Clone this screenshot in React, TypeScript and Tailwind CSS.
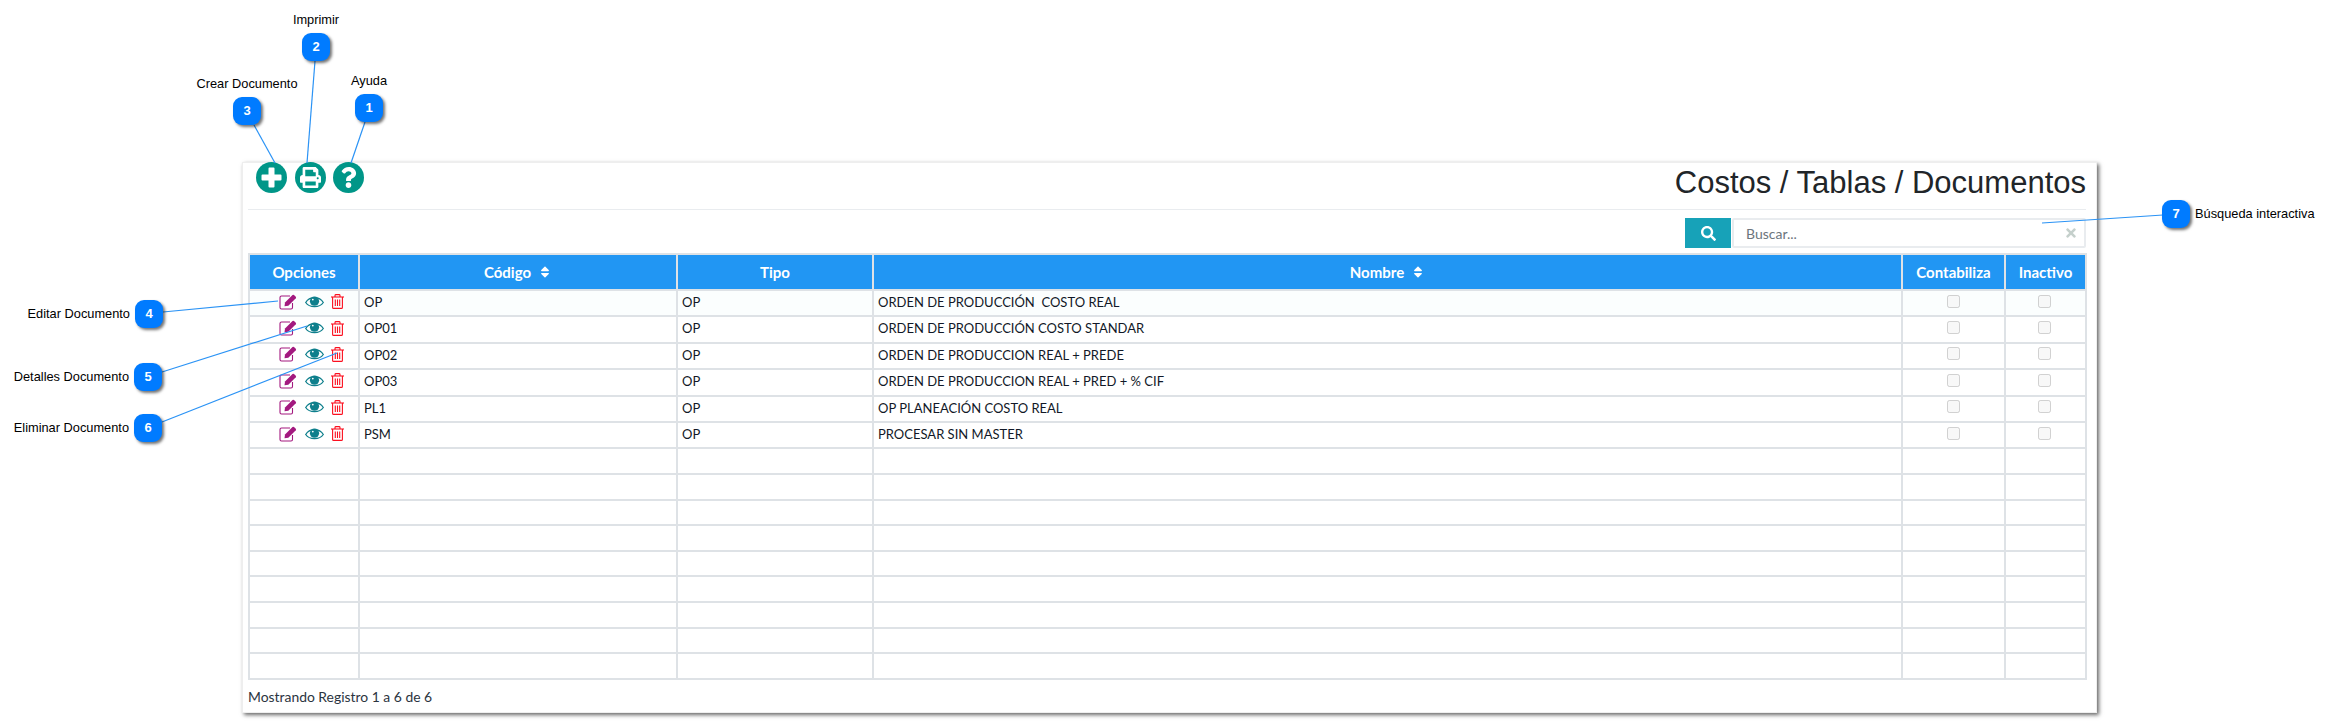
import { FaPrint, FaQuestion, FaSearch, FaTimes, FaSort } from "react-icons/fa";

const rows = [
  ["OP", "OP", "ORDEN DE PRODUCCIÓN  COSTO REAL"],
  ["OP01", "OP", "ORDEN DE PRODUCCIÓN COSTO STANDAR"],
  ["OP02", "OP", "ORDEN DE PRODUCCION REAL + PREDE"],
  ["OP03", "OP", "ORDEN DE PRODUCCION REAL + PRED + % CIF"],
  ["PL1", "OP", "OP PLANEACIÓN COSTO REAL"],
  ["PSM", "OP", "PROCESAR SIN MASTER"],
];
const empties = Array.from({ length: 9 }, (_, i) => i);

const callouts = [
  { n: "1", x: 369, y: 108 },
  { n: "2", x: 316, y: 47 },
  { n: "3", x: 247, y: 111 },
  { n: "4", x: 149, y: 314 },
  { n: "5", x: 148, y: 377 },
  { n: "6", x: 148, y: 428 },
  { n: "7", x: 2176, y: 214 },
];
const lines = [
  [365, 122, 351, 163],
  [315, 61, 307, 163],
  [254, 125, 275, 163],
  [163, 312, 278, 301],
  [162, 372, 307, 326],
  [162, 422, 337, 353],
  [2163, 215, 2042, 223],
];
const labels = [
  { t: "Ayuda", x: 369, y: 81 },
  { t: "Imprimir", x: 316, y: 20 },
  { t: "Crear Documento", x: 247, y: 84 },
];
const sideLabels = [
  { t: "Editar Documento", r: 130, y: 314 },
  { t: "Detalles Documento", r: 129, y: 377 },
  { t: "Eliminar Documento", r: 129, y: 428 },
];

const th = "border-2 border-[#dee2e6] text-center font-bold text-white text-[15px] p-0";
const td = "border-2 border-[#dee2e6] px-[4px] pt-0 pb-[1px] align-middle";

function ToolBtn({ children }: { children: React.ReactNode }) {
  return (
    <div className="flex h-[31px] w-[31px] items-center justify-center rounded-full bg-[#009688] text-white">
      {children}
    </div>
  );
}

function EditIcon() {
  return (
    <svg width="18" height="16" viewBox="0 0 18 16" className="shrink-0 text-[#a3197f]">
      <path d="M11 2 H2.5 Q1 2 1 3.5 V13.5 Q1 15 2.5 15 H12 Q13.5 15 13.5 13.5 V9" fill="none" stroke="currentColor" strokeWidth="1.1" />
      <path d="M6 8.5 L13.5 1 Q14.2 0.4 15 1 L16.8 2.8 Q17.4 3.5 16.8 4.2 L9.3 11.7 L5.5 12.2 Z" fill="currentColor" />
    </svg>
  );
}

function EyeIcon() {
  return (
    <svg width="19" height="14" viewBox="0 0 19 14" className="shrink-0 text-[#0e7f8c]">
      <path d="M0.7 7.5 C4.5 1 14.5 1 18.3 7.5 C14.5 13 4.5 13 0.7 7.5 Z" fill="none" stroke="currentColor" strokeWidth="1.3" />
      <circle cx="9.5" cy="6.2" r="4.6" fill="currentColor" />
      <circle cx="7.8" cy="4.6" r="0.9" fill="#ffffff" />
    </svg>
  );
}

function TrashIcon() {
  return (
    <svg width="13" height="15" viewBox="0 0 13 15" className="shrink-0 text-[#fb0f1f]" fill="none" stroke="currentColor" strokeWidth="1.1">
      <path d="M0 3 H13" />
      <path d="M4 3 V1.5 Q4 0.6 5 0.6 H8 Q9 0.6 9 1.5 V3" />
      <path d="M1.6 3 V13.4 Q1.6 14.4 2.6 14.4 H10.4 Q11.4 14.4 11.4 13.4 V3" />
      <path d="M4.3 5.5 V12 M6.5 5.5 V12 M8.7 5.5 V12" />
    </svg>
  );
}

export default function App() {
  return (
    <div className="relative h-[722px] w-[2331px] overflow-hidden bg-white pl-[242px] pt-[162px] font-['Lato',sans-serif]">
      <div className="flex h-[551px] w-[1855px] flex-col border border-[#eeeeee] bg-white pl-[5px] pr-[10px] shadow-[2px_2px_4px_rgba(0,0,0,0.6)]">
        <div className="flex h-[47px] items-start justify-between border-b border-[#e9ecef]">
          <div className="ml-[8px] mt-[-1px] flex gap-[7.5px]">
            <ToolBtn>
              <svg width="21" height="21" viewBox="0 0 21 21" fill="currentColor">
                <path d="M7.5 1.5 Q7.5 0.5 8.5 0.5 H12.5 Q13.5 0.5 13.5 1.5 V7.5 H19.5 Q20.5 7.5 20.5 8.5 V12.5 Q20.5 13.5 19.5 13.5 H13.5 V19.5 Q13.5 20.5 12.5 20.5 H8.5 Q7.5 20.5 7.5 19.5 V13.5 H1.5 Q0.5 13.5 0.5 12.5 V8.5 Q0.5 7.5 1.5 7.5 H7.5 Z" />
              </svg>
            </ToolBtn>
            <ToolBtn><FaPrint className="text-[21px]" /></ToolBtn>
            <ToolBtn><FaQuestion className="text-[21px]" /></ToolBtn>
          </div>
          <h1 className="mt-[4px] font-['Liberation_Sans',sans-serif] text-[31px] font-normal leading-[32px] text-[#212529]">
            Costos / Tablas / Documentos
          </h1>
        </div>
        <div className="mt-[8px] flex h-[30px] justify-end">
          <div className="flex w-[46px] items-center justify-center bg-[#17a2b8] text-white">
            <FaSearch className="text-[15px]" />
          </div>
          <div className="ml-[1px] flex w-[354px] items-center justify-between rounded-[2px] border-2 border-[#e9ecef] pl-[12px] pr-[6px] text-[14px] text-[#6c757d]">
            <span>Buscar...</span>
            <FaTimes className="text-[14px] text-[#c5d0cc]" />
          </div>
        </div>
        <table className="mt-[5px] w-[1837px] table-fixed border-collapse border-2 border-[#dee2e6] text-[13px] text-[#111827]">
          <colgroup>
            <col className="w-[110px]" />
            <col className="w-[318px]" />
            <col className="w-[196px]" />
            <col className="w-[1029px]" />
            <col className="w-[103px]" />
            <col className="w-[81px]" />
          </colgroup>
          <thead>
            <tr className="h-[36px] bg-[#2196f3]">
              <th className={th}>Opciones</th>
              <th className={th}>
                <span className="inline-flex items-center gap-[7px]">Código <FaSort className="text-[14px]" /></span>
              </th>
              <th className={th}>Tipo</th>
              <th className={th}>
                <span className="inline-flex items-center gap-[7px]">Nombre <FaSort className="text-[14px]" /></span>
              </th>
              <th className={th}>Contabiliza</th>
              <th className={th}>Inactivo</th>
            </tr>
          </thead>
          <tbody>
            {rows.map((r, i) => (
              <tr key={r[0]} className={i === 0 ? "h-[26.4px] bg-[#fbfefe]" : "h-[26.4px]"}>
                <td className={td}>
                  <div className="mb-[2px] flex items-center justify-center gap-[7.5px] pl-[15px]">
                    <EditIcon />
                    <EyeIcon />
                    <TrashIcon />
                  </div>
                </td>
                <td className={td}>{r[0]}</td>
                <td className={td}>{r[1]}</td>
                <td className={`${td} whitespace-pre`}>{r[2]}</td>
                <td className={`${td} text-center`}><input type="checkbox" disabled className="mb-[5px] align-middle" /></td>
                <td className={`${td} text-center`}><input type="checkbox" disabled className="mb-[5px] mr-[2px] align-middle" /></td>
              </tr>
            ))}
            {empties.map((i) => (
              <tr key={i} className="h-[25.6px]">
                <td className={td}></td>
                <td className={td}></td>
                <td className={td}></td>
                <td className={td}></td>
                <td className={td}></td>
                <td className={td}></td>
              </tr>
            ))}
          </tbody>
        </table>
        <div className="mt-[8px] text-[13.9px] leading-[18px] text-[#2b3440]">Mostrando Registro 1 a 6 de 6</div>
      </div>

      <svg className="pointer-events-none absolute left-0 top-0" width="2331" height="722">
        {lines.map((l, i) => (
          <line key={i} x1={l[0]} y1={l[1]} x2={l[2]} y2={l[3]} stroke="#2b93f5" strokeWidth="1.2" />
        ))}
      </svg>

      {callouts.map((c) => (
        <div
          key={c.n}
          style={{ left: c.x - 14, top: c.y - 14 }}
          className="absolute flex h-[28px] w-[28px] items-center justify-center rounded-[9px] bg-[#007bff] font-['Liberation_Sans',sans-serif] text-[13px] font-bold text-white shadow-[2px_2px_3px_rgba(0,0,0,0.55)]"
        >
          {c.n}
        </div>
      ))}
      {labels.map((l) => (
        <div
          key={l.t}
          style={{ left: l.x - 60, top: l.y - 8 }}
          className="absolute h-[16px] w-[120px] text-center font-['Liberation_Sans',sans-serif] text-[12.8px] leading-[16px] text-black"
        >
          {l.t}
        </div>
      ))}
      {sideLabels.map((l) => (
        <div
          key={l.t}
          style={{ left: l.r - 130, top: l.y - 8 }}
          className="absolute h-[16px] w-[130px] text-right font-['Liberation_Sans',sans-serif] text-[12.8px] leading-[16px] text-black"
        >
          {l.t}
        </div>
      ))}
      <div className="absolute left-[2195px] top-[206px] font-['Liberation_Sans',sans-serif] text-[12.8px] leading-[16px] text-black">
        Búsqueda interactiva
      </div>
    </div>
  );
}
